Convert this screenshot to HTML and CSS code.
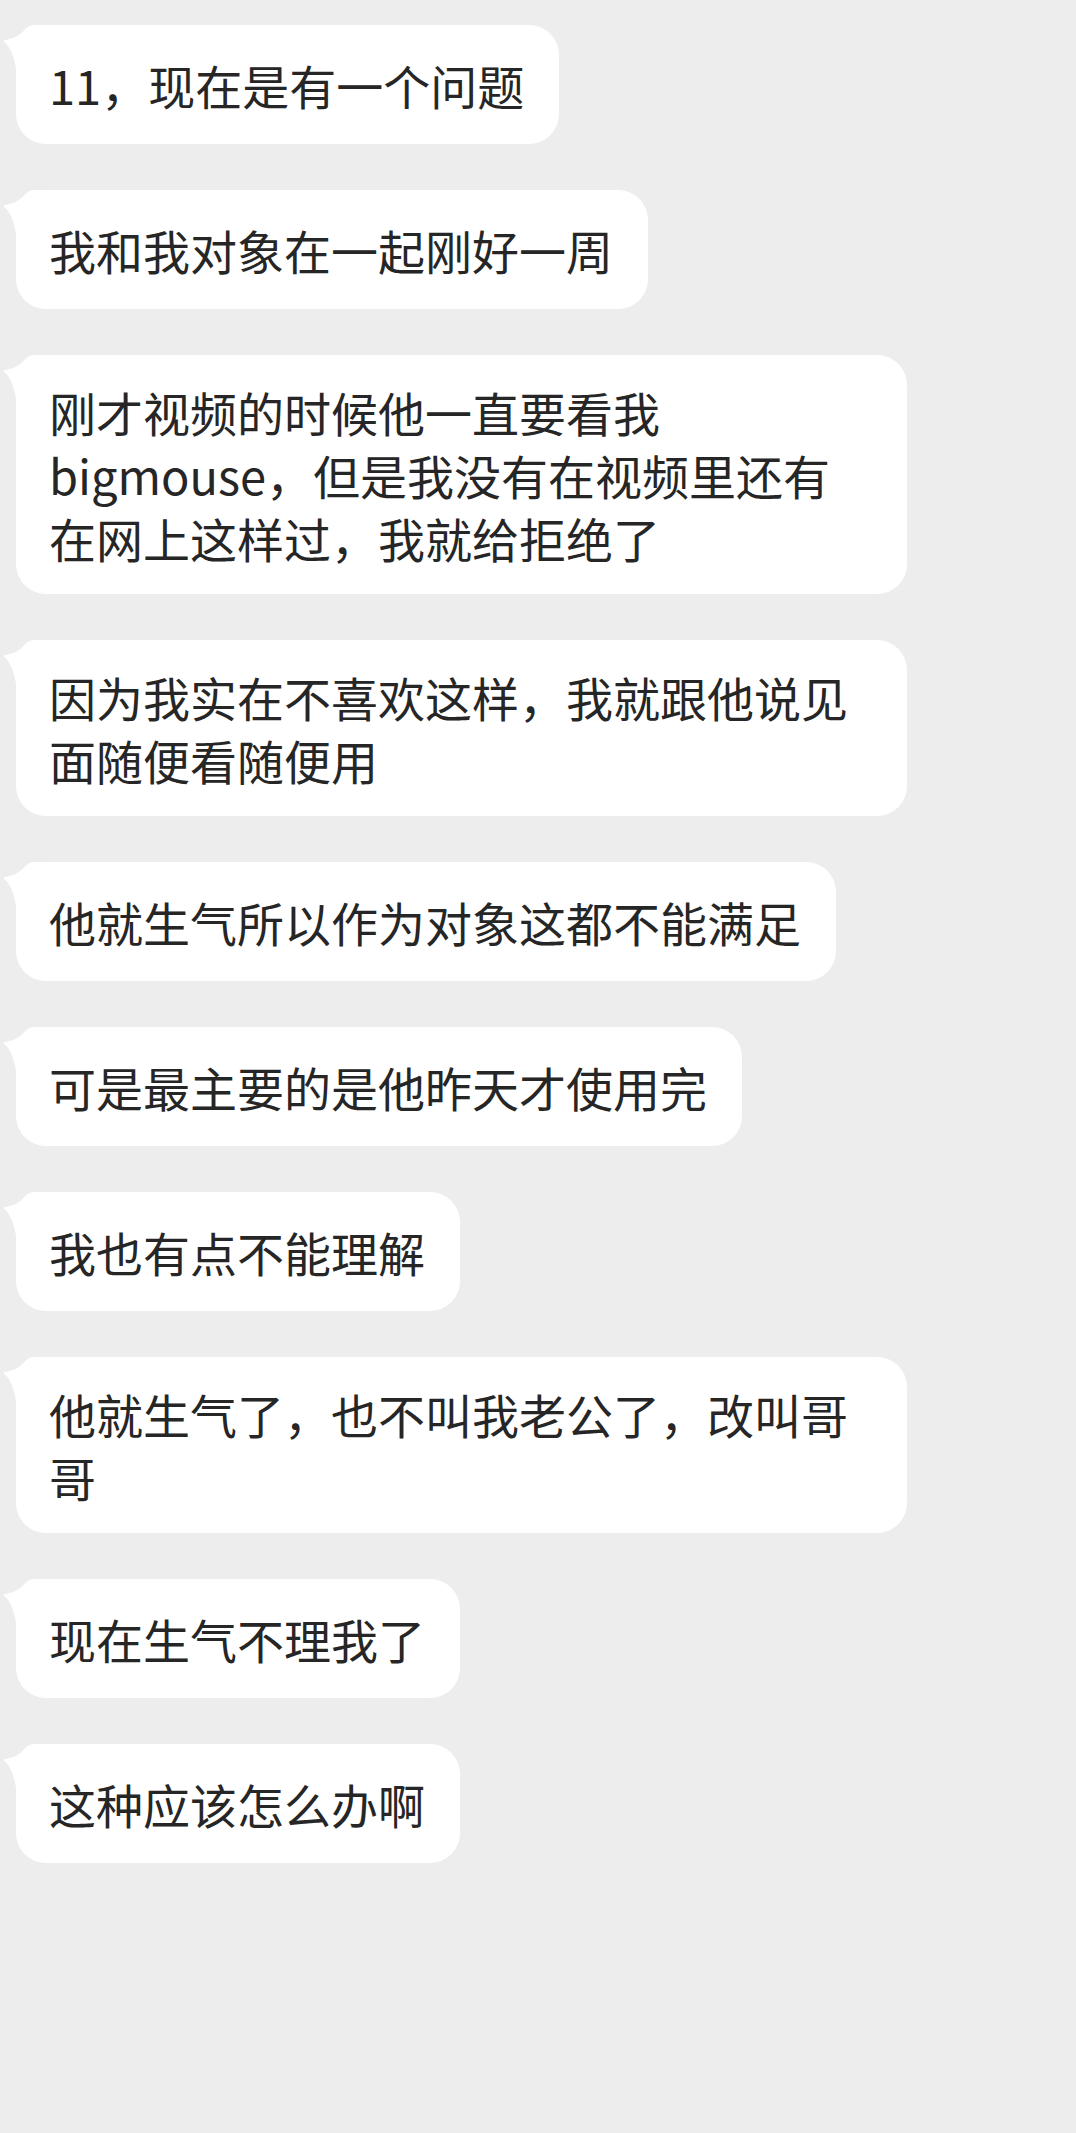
FILE: index.html
```html
<!DOCTYPE html>
<html lang="zh-CN">
<head>
<meta charset="utf-8">
<title>聊天记录</title>
<link rel="stylesheet" href="styles.css">
</head>
<body>
<main class="chat">
  <div class="bubble"><svg class="tail" viewBox="0 0 40 60" width="40" height="60"><path d="M0 15 C8 14.5 14 11 18 7.5 C22 3 25 0 30 0 L40 0 L40 60 L12 60 L12 44 C10 30 5 20 0 17 Z"/></svg><p class="text">11，现在是有一个问题</p></div>
  <div class="bubble"><svg class="tail" viewBox="0 0 40 60" width="40" height="60"><path d="M0 15 C8 14.5 14 11 18 7.5 C22 3 25 0 30 0 L40 0 L40 60 L12 60 L12 44 C10 30 5 20 0 17 Z"/></svg><p class="text">我和我对象在一起刚好一周</p></div>
  <div class="bubble"><svg class="tail" viewBox="0 0 40 60" width="40" height="60"><path d="M0 15 C8 14.5 14 11 18 7.5 C22 3 25 0 30 0 L40 0 L40 60 L12 60 L12 44 C10 30 5 20 0 17 Z"/></svg><p class="text">刚才视频的时候他一直要看我 bigmouse，但是我没有在视频里还有<br>在网上这样过，我就给拒绝了</p></div>
  <div class="bubble"><svg class="tail" viewBox="0 0 40 60" width="40" height="60"><path d="M0 15 C8 14.5 14 11 18 7.5 C22 3 25 0 30 0 L40 0 L40 60 L12 60 L12 44 C10 30 5 20 0 17 Z"/></svg><p class="text">因为我实在不喜欢这样，我就跟他说见面随便看随便用</p></div>
  <div class="bubble"><svg class="tail" viewBox="0 0 40 60" width="40" height="60"><path d="M0 15 C8 14.5 14 11 18 7.5 C22 3 25 0 30 0 L40 0 L40 60 L12 60 L12 44 C10 30 5 20 0 17 Z"/></svg><p class="text">他就生气所以作为对象这都不能满足</p></div>
  <div class="bubble"><svg class="tail" viewBox="0 0 40 60" width="40" height="60"><path d="M0 15 C8 14.5 14 11 18 7.5 C22 3 25 0 30 0 L40 0 L40 60 L12 60 L12 44 C10 30 5 20 0 17 Z"/></svg><p class="text">可是最主要的是他昨天才使用完</p></div>
  <div class="bubble"><svg class="tail" viewBox="0 0 40 60" width="40" height="60"><path d="M0 15 C8 14.5 14 11 18 7.5 C22 3 25 0 30 0 L40 0 L40 60 L12 60 L12 44 C10 30 5 20 0 17 Z"/></svg><p class="text">我也有点不能理解</p></div>
  <div class="bubble"><svg class="tail" viewBox="0 0 40 60" width="40" height="60"><path d="M0 15 C8 14.5 14 11 18 7.5 C22 3 25 0 30 0 L40 0 L40 60 L12 60 L12 44 C10 30 5 20 0 17 Z"/></svg><p class="text">他就生气了，也不叫我老公了，改叫哥哥</p></div>
  <div class="bubble"><svg class="tail" viewBox="0 0 40 60" width="40" height="60"><path d="M0 15 C8 14.5 14 11 18 7.5 C22 3 25 0 30 0 L40 0 L40 60 L12 60 L12 44 C10 30 5 20 0 17 Z"/></svg><p class="text">现在生气不理我了</p></div>
  <div class="bubble"><svg class="tail" viewBox="0 0 40 60" width="40" height="60"><path d="M0 15 C8 14.5 14 11 18 7.5 C22 3 25 0 30 0 L40 0 L40 60 L12 60 L12 44 C10 30 5 20 0 17 Z"/></svg><p class="text">这种应该怎么办啊</p></div>
</main>
</body>
</html>
```
FILE: styles.css
```css
html, body {
  margin: 0;
  padding: 0;
  background: #ededed;
}
body {
  width: 1076px;
  min-height: 2133px;
  font-family: "Noto Sans CJK SC", "Noto Sans", sans-serif;
  color: #262626;
}
.chat {
  display: flex;
  flex-direction: column;
  align-items: flex-start;
  gap: 46px;
  padding: 25px 0 0 16px;
}
.bubble {
  position: relative;
  box-sizing: border-box;
  max-width: 891px;
  min-height: 119px;
  padding: 25px 35px 25px 33px;
  background: #ffffff;
  border-radius: 30px;
  display: flex;
  align-items: center;
}
.tail {
  position: absolute;
  left: -12px;
  top: 0;
  fill: #ffffff;
}
.text {
  position: relative;
  margin: 0;
  font-size: 47px;
  line-height: 63px;
  letter-spacing: 0;
}
```
